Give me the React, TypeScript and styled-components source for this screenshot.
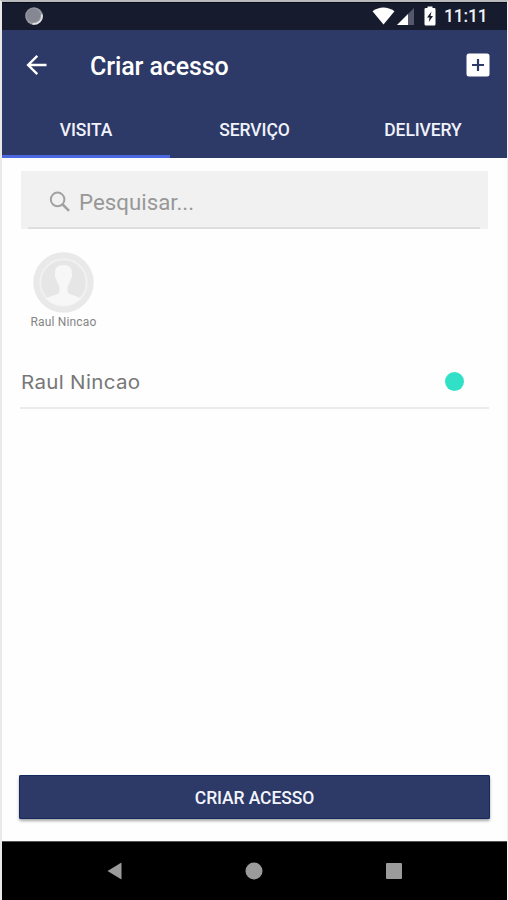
import React from "react";
import styled, { createGlobalStyle } from "styled-components";

const NAVY = "#2d3966";

const GlobalStyle = createGlobalStyle`
  * { box-sizing: border-box; }
  body { margin: 0; background: #fff; font-family: Roboto, "Liberation Sans", sans-serif; }
  button { font-family: inherit; border: 0; padding: 0; background: none; }
  svg { display: block; }
`;

const Phone = styled.div`
  width: 508px;
  height: 900px;
  display: flex;
  flex-direction: column;
  overflow: hidden;
  background: #fefefe;
  border-top: 2px solid #b9babd;
  border-left: 2px solid #e9e9e9;
  border-right: 1px solid #f1f1f1;
`;

const StatusBar = styled.div`
  height: 28px;
  flex: none;
  display: flex;
  align-items: center;
  justify-content: space-between;
  padding: 0 20px 1px 22px;
  background: #161c2d;
  border-top: 1px solid #080b14;
`;

const StatusIcons = styled.div`
  display: flex;
  align-items: center;
`;

const Clock = styled.span`
  width: 43px;
  margin-left: 8px;
  color: #f0f1f5;
  font-size: 17.5px;
  font-weight: 500;
  line-height: 26px;
  letter-spacing: -0.2px;
  white-space: nowrap;
`;

const Header = styled.header`
  height: 128px;
  flex: none;
  display: flex;
  flex-direction: column;
  background: ${NAVY};
`;

const Toolbar = styled.div`
  height: 71px;
  display: flex;
  align-items: center;
  padding: 0 17px 1px 21px;
`;

const IconButton = styled.button`
  display: flex;
  flex: none;
`;

const Title = styled.h1`
  flex: 1;
  margin: 3px 0 0 39px;
  color: #fff;
  font-size: 25px;
  font-weight: 500;
  line-height: 32px;
  letter-spacing: -0.1px;
`;

const Tabs = styled.nav`
  flex: 1;
  display: grid;
  grid-template-columns: 168px 169px 168px;
`;

const Tab = styled.button<{ $active?: boolean }>`
  padding-top: 3px;
  color: #f0f2fc;
  font-size: 17.5px;
  font-weight: 500;
  letter-spacing: -0.1px;
  border-bottom: 3px solid ${(p) => (p.$active ? "#4a68e0" : NAVY)};
`;

const Content = styled.main`
  flex: 1;
  display: flex;
  flex-direction: column;
  padding: 13px 17px 22px 19px;
`;

const Search = styled.label`
  height: 58px;
  width: 467px;
  flex: none;
  display: flex;
  padding: 0 8px 0 7px;
  background: #f1f1f1;
`;

const SearchField = styled.div`
  flex: 1;
  display: flex;
  align-items: center;
  gap: 8px;
  padding: 6px 0 0 21px;
  border-bottom: 2px solid #dedede;
  color: #989898;
  font-size: 22.3px;
`;

const Contact = styled.div`
  width: 85px;
  height: 119px;
  flex: none;
  display: flex;
  flex-direction: column;
  align-items: center;
  padding-top: 23px;
`;

const ContactName = styled.span`
  margin-top: 1px;
  color: #858585;
  font-size: 12px;
  line-height: 16px;
  letter-spacing: 0.15px;
`;

const PersonRow = styled.div`
  height: 61px;
  width: 469px;
  margin-left: -1px;
  flex: none;
  display: flex;
  align-items: center;
  justify-content: space-between;
  padding: 8px 25px 0 1px;
  border-bottom: 2px solid #ebebeb;
`;

const PersonName = styled.span`
  margin-top: 2px;
  color: #777;
  font-family: Inter, "Open Sans", sans-serif;
  font-size: 19px;
  letter-spacing: 0.3px;
  transform: scaleX(1.08);
  transform-origin: left;
`;

const Presence = styled.span`
  width: 19px;
  height: 19px;
  border-radius: 50%;
  background: #32dfc7;
`;

const Submit = styled.button`
  height: 44px;
  width: 471px;
  flex: none;
  margin: auto 0 0 -2px;
  padding-top: 1px;
  border-radius: 2px;
  background: ${NAVY};
  color: #f2f4fd;
  font-size: 17.5px;
  font-weight: 500;
  letter-spacing: -0.1px;
  box-shadow: inset 0 0 0 1px #15295f, 0 2px 3px rgba(0, 0, 0, 0.35);
`;

const NavBar = styled.footer`
  height: 59px;
  flex: none;
  display: grid;
  grid-template-columns: repeat(3, 140px);
  justify-content: center;
  place-items: center;
  padding: 0 1px 1px 0;
  background: #000;
  border-top: 1px solid #555;
`;

const SyncIcon = () => (
  <svg width="20" height="20" viewBox="0 0 20 20">
    <circle cx="10" cy="10" r="8.8" fill="#9698a0" />
    <path d="M17.8 8.5A8 8 0 0 1 8.5 17.8" fill="none" stroke="#e3e3e6" strokeWidth="1.8" />
    <circle cx="9.4" cy="9.4" r="6.8" fill="#858893" />
  </svg>
);

const WifiIcon = () => (
  <svg width="23" height="18" viewBox="0 0 23 18">
    <path d="M0.5 4.2Q11.3-3.2 22.5 4.2L11.5 17.5Z" fill="#fff" />
  </svg>
);

const SignalIcon = () => (
  <svg width="18" height="18" viewBox="0 0 18 18">
    <path d="M0 18 17 1V18Z" fill="#54586a" />
    <path d="M0 18 11 7V18Z" fill="#fff" />
  </svg>
);

const BatteryIcon = () => (
  <svg width="12" height="20" viewBox="0 0 12 20">
    <path d="M3.5 2V0.5h5V2h1.7Q11.5 2 11.5 3.3V18q0 1.5-1.3 1.5H1.8Q.5 19.5 .5 18V3.3Q.5 2 1.8 2Z" fill="#fff" />
    <path d="M7.5 5.5 3 11.5H5.5L4.8 16 9 10H6.5Z" fill="#161c2d" />
  </svg>
);

const BackIcon = () => (
  <svg width="28" height="28" viewBox="0 0 28 28" fill="none" stroke="#fff" strokeWidth="2.4">
    <path d="M23.5 14H5M14.3 4.8 5.1 14l9.2 9.2" />
  </svg>
);

const AddIcon = () => (
  <svg width="24" height="24" viewBox="0 0 24 24">
    <rect x="0.5" y="0.5" width="23" height="23" rx="2.5" fill="#fff" />
    <path d="M12 6v12M6 12h12" stroke={NAVY} strokeWidth="2.2" />
  </svg>
);

const SearchIcon = () => (
  <svg width="22" height="22" viewBox="0 0 22 22" fill="none" stroke="#a2a2a2">
    <circle cx="8.6" cy="8.4" r="6.8" strokeWidth="2" />
    <path d="M13.2 13 20 19.8" strokeWidth="2.6" />
  </svg>
);

const AvatarIcon = () => (
  <svg width="61" height="61" viewBox="0 0 61 61">
    <circle cx="30.5" cy="30.5" r="30.2" fill="#e9e9e9" />
    <circle cx="30.5" cy="30.5" r="23.2" fill="#e6e6e6" stroke="#f1f1f1" strokeWidth="2" />
    <path
      d="M30.500 13c-6.500 0-9 3.500-8.300 9-.9 1.500-.1 4 1.200 5.200.5 3 1.500 5 3 6.500v6.500c-1.500 3-9 3-13.300 6.500Q20 53.500 30.500 53.500T47.900 46.700c-4.300-3.500-11.800-3.500-13.300-6.500v-6.500c1.500-1.500 2.500-3.500 3-6.500 1.300-1.200 2-3.700 1.200-5.200.7-5.500-2-9-8.300-9Z"
      fill="#f7f7f7"
    />
  </svg>
);

const NavBack = () => (
  <svg width="15" height="18" viewBox="0 0 15 18">
    <path d="M0.5 9 14.5 0.5v17Z" fill="#9b9b9b" />
  </svg>
);

const NavHome = () => (
  <svg width="18" height="18" viewBox="0 0 18 18">
    <circle cx="9" cy="9" r="8.5" fill="#9b9b9b" />
  </svg>
);

const NavRecent = () => (
  <svg width="16" height="16" viewBox="0 0 16 16">
    <rect width="16" height="16" rx="1" fill="#9b9b9b" />
  </svg>
);

const BatterySlot = styled.div`
  margin: 0 0 0 9px;
`;

const SignalSlot = styled.div`
  margin: 0 0 0 2px;
`;

const tabs = ["VISITA", "SERVIÇO", "DELIVERY"];

export default function App() {
  return (
    <>
      <GlobalStyle />
      <Phone>
        <StatusBar>
          <SyncIcon />
          <StatusIcons>
            <WifiIcon />
            <SignalSlot><SignalIcon /></SignalSlot>
            <BatterySlot><BatteryIcon /></BatterySlot>
            <Clock>11:11</Clock>
          </StatusIcons>
        </StatusBar>
        <Header>
          <Toolbar>
            <IconButton aria-label="Voltar"><BackIcon /></IconButton>
            <Title>Criar acesso</Title>
            <IconButton aria-label="Adicionar"><AddIcon /></IconButton>
          </Toolbar>
          <Tabs>
            {tabs.map((name, i) => (
              <Tab key={name} $active={i === 0}>{name}</Tab>
            ))}
          </Tabs>
        </Header>
        <Content>
          <Search>
            <SearchField>
              <SearchIcon />
              <span>Pesquisar...</span>
            </SearchField>
          </Search>
          <Contact>
            <AvatarIcon />
            <ContactName>Raul Nincao</ContactName>
          </Contact>
          <PersonRow>
            <PersonName>Raul Nincao</PersonName>
            <Presence />
          </PersonRow>
          <Submit>CRIAR ACESSO</Submit>
        </Content>
        <NavBar>
          <NavBack />
          <NavHome />
          <NavRecent />
        </NavBar>
      </Phone>
    </>
  );
}
